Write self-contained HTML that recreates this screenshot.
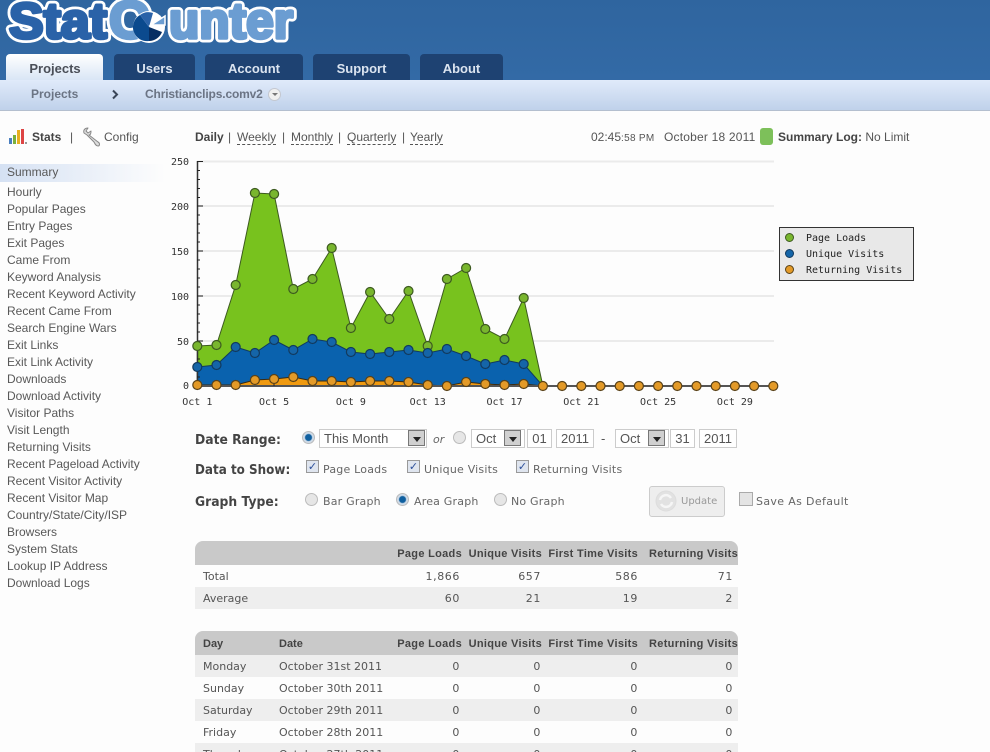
<!DOCTYPE html>
<html><head><meta charset="utf-8"><title>StatCounter</title>
<style>
html,body{margin:0;padding:0}
body{width:990px;height:752px;overflow:hidden;position:relative;background:#fdfdfd;font-family:"Liberation Sans",sans-serif;color:#555;font-size:12px}
#w{position:absolute;left:0;top:0;width:990px;height:752px;overflow:hidden;filter:blur(.3px)}
.a{position:absolute;white-space:nowrap}
#hdr{left:0;top:0;width:990px;height:80px;background:linear-gradient(#2f659f,#336aa6)}
.tab{position:absolute;top:54px;height:26px;background:#1e4272;border-radius:4px 4px 0 0;color:#dbe4f0;font:bold 13px/29px "Liberation Sans",sans-serif;text-align:center}
#sub{left:0;top:80px;width:990px;height:30px;background:linear-gradient(#e0eafa,#bfd1ea);border-bottom:1px solid #b4bfcf}
.sb{left:7px;font-size:12px;line-height:17px;color:#585858}
.dj{font-family:"DejaVu Sans",sans-serif;font-size:11px;color:#666;letter-spacing:.2px}
.lb{font:bold 13px/16px "DejaVu Sans",sans-serif;color:#444;transform-origin:0 0;transform:scaleX(.95)}
.inp{position:absolute;top:429px;height:17px;background:#fff;border:1px solid #ccc;font-size:13px;line-height:18px;color:#555;box-sizing:content-box}
.arr{position:absolute;top:430px;width:17px;height:16px;background:#d0d0d0;border:1px solid #777;box-sizing:border-box}
.arr:after{content:"";position:absolute;left:4px;top:6px;border:4px solid transparent;border-top:5px solid #222;border-bottom:0}
.rad{position:absolute;width:11px;height:11px;border-radius:50%;background:#e6e6e6;border:1px solid #bbb}
.rad.on{background:radial-gradient(circle,#0f5f9f 0 3px,#cfdbe8 4px)}
.chk{position:absolute;width:11px;height:11px;background:#dfe5ef;border:1px solid #999;color:#2c4f9a;font:bold 11px/11px "DejaVu Sans",sans-serif;text-align:center}
.tb{position:absolute;left:195px;width:543px}
.row{position:absolute;left:0;width:543px;height:22px;line-height:22px}
.row span{position:absolute;top:1px;white-space:nowrap;font:11px/22px "DejaVu Sans",sans-serif;color:#555}
.hd{background:#c9c9c9;height:24px;border-radius:8px 8px 0 0}
.hd span{font:bold 11px/24px "Liberation Sans",sans-serif;color:#444;letter-spacing:.3px}
.g{background:#eee}
.row span.r1,.row span.r2,.row span.r3,.row span.r4{letter-spacing:.6px}
.r1{right:278px}.r2{right:197px}.r3{right:100px}.r4{right:5px}
.h1{right:276px}.h2{right:196px}.h3{right:100px}.h4{right:0}
.d1{left:8px}.d2{left:84px}
.dl{top:130px;line-height:14px;color:#555}
.dl u{text-decoration:none;border-bottom:1px dashed #555}
</style></head><body><div id="w">
<div class="a" id="hdr"></div>
<svg class="a" style="left:0;top:0" width="310" height="54" viewBox="0 0 310 54">
<g font-family="'Liberation Sans',sans-serif" font-weight="bold" stroke="#fff" stroke-width="9" stroke-linejoin="round" fill="#fff">
<text x="9" y="38" font-size="50" textLength="98" lengthAdjust="spacingAndGlyphs">Stat</text>
<text x="109" y="38" font-size="53" textLength="40" lengthAdjust="spacingAndGlyphs">C</text>
<text x="169" y="38" font-size="50" textLength="124" lengthAdjust="spacingAndGlyphs">unter</text>
</g>
<g font-family="'Liberation Sans',sans-serif" font-weight="bold" stroke-width="3.500" stroke-linejoin="round">
<text x="9" y="38" font-size="50" fill="#2a62a8" stroke="#2a62a8" textLength="98" lengthAdjust="spacingAndGlyphs">Stat</text>
<text x="109" y="38" font-size="53" fill="#6b9dd2" stroke="#6b9dd2" textLength="40" lengthAdjust="spacingAndGlyphs">C</text>
<text x="169" y="38" font-size="50" fill="#6b9dd2" stroke="#6b9dd2" textLength="124" lengthAdjust="spacingAndGlyphs">unter</text>
</g>
<circle cx="149" cy="27" r="16" fill="#fff"/>
<path d="M149 27L140 15A14 14 0 0 0 149 41Z" fill="#0b4a8e"/>
<path d="M149 27V41A14 14 0 0 0 162 32Z" fill="#062e63"/>
<path d="M149 27L140 15A14 14 0 0 1 153 13Z" fill="#2a62a8"/>
<path d="M151 25L165 16V25Z" fill="#6b9dd2" stroke="#fff" stroke-width="1.500"/>
</svg>
<div class="tab" style="left:6px;width:97px;background:linear-gradient(#fff,#d9e5f5);color:#4a4f58;padding-left:1px;box-sizing:border-box">Projects</div>
<div class="tab" style="left:114px;width:81px">Users</div>
<div class="tab" style="left:205px;width:98px">Account</div>
<div class="tab" style="left:313px;width:97px">Support</div>
<div class="tab" style="left:420px;width:83px">About</div>
<div class="a" id="sub"></div>
<div class="a" style="left:31px;top:87px;font:bold 12px/15px 'Liberation Sans',sans-serif;color:#6b7484">Projects</div>
<svg class="a" style="left:111px;top:89px" width="8" height="11"><path d="M2 1.500L6 5.500L2 9.500" fill="none" stroke="#3a4658" stroke-width="2"/></svg>
<div class="a" style="left:145px;top:87px;font:bold 12px/15px 'Liberation Sans',sans-serif;color:#6b7484;letter-spacing:-.15px">Christianclips.comv2</div>
<div class="a" style="left:268px;top:88px;width:13px;height:13px;border-radius:50%;background:#f0f0f0;border:1px solid #c4c8d0;box-sizing:border-box"></div>
<div class="a" style="left:272px;top:93px;border:3px solid transparent;border-top:3px solid #777;border-bottom:0"></div>

<svg class="a" style="left:8px;top:127px" width="20" height="18"><rect x="1" y="11" width="3" height="6" fill="#4a7fc0"/><rect x="5" y="8" width="3" height="9" fill="#7cb13c"/><rect x="9" y="3" width="3" height="14" fill="#e8b020"/><rect x="13" y="2" width="3" height="15" fill="#d44"/><rect x="17" y="15" width="2" height="2" fill="#999"/></svg>
<div class="a" style="left:32px;top:130px;font:bold 12px/14px 'Liberation Sans',sans-serif;color:#444">Stats</div>
<div class="a" style="left:70px;top:130px;line-height:14px;color:#555">|</div>
<svg class="a" style="left:82px;top:127px" width="20" height="20"><path d="M2 6C1 3 3 1 6 1L4 4L6 6L9 4C9 7 8 8 7 8L16 15C18 16 18 19 16 19C14 19 13 17 12 15L5 8Z" fill="#ddd" stroke="#888" stroke-width="1" stroke-linejoin="round"/></svg>
<div class="a" style="left:104px;top:130px;line-height:14px;color:#555">Config</div>

<div class="a" style="left:0;top:164px;width:165px;height:18px;background:linear-gradient(90deg,#d5e1f3,#fdfdfd)"></div>
<div class="a sb" style="top:164px">Summary</div>
<div class="a sb" style="top:184px">Hourly</div>
<div class="a sb" style="top:201px">Popular Pages</div>
<div class="a sb" style="top:218px">Entry Pages</div>
<div class="a sb" style="top:235px">Exit Pages</div>
<div class="a sb" style="top:252px">Came From</div>
<div class="a sb" style="top:269px">Keyword Analysis</div>
<div class="a sb" style="top:286px">Recent Keyword Activity</div>
<div class="a sb" style="top:303px">Recent Came From</div>
<div class="a sb" style="top:320px">Search Engine Wars</div>
<div class="a sb" style="top:337px">Exit Links</div>
<div class="a sb" style="top:354px">Exit Link Activity</div>
<div class="a sb" style="top:371px">Downloads</div>
<div class="a sb" style="top:388px">Download Activity</div>
<div class="a sb" style="top:405px">Visitor Paths</div>
<div class="a sb" style="top:422px">Visit Length</div>
<div class="a sb" style="top:439px">Returning Visits</div>
<div class="a sb" style="top:456px">Recent Pageload Activity</div>
<div class="a sb" style="top:473px">Recent Visitor Activity</div>
<div class="a sb" style="top:490px">Recent Visitor Map</div>
<div class="a sb" style="top:507px">Country/State/City/ISP</div>
<div class="a sb" style="top:524px">Browsers</div>
<div class="a sb" style="top:541px">System Stats</div>
<div class="a sb" style="top:558px">Lookup IP Address</div>
<div class="a sb" style="top:575px">Download Logs</div>

<div class="a dl" style="left:195px"><b style="color:#444">Daily</b></div>
<div class="a dl" style="left:228px">|</div>
<div class="a dl" style="left:237px"><u>Weekly</u></div>
<div class="a dl" style="left:282px">|</div>
<div class="a dl" style="left:291px"><u>Monthly</u></div>
<div class="a dl" style="left:338px">|</div>
<div class="a dl" style="left:347px"><u>Quarterly</u></div>
<div class="a dl" style="left:402px">|</div>
<div class="a dl" style="left:410px"><u>Yearly</u></div>
<div class="a" style="left:591px;top:130px;line-height:14px;color:#555">02:45<span style="font-size:10px;letter-spacing:.3px">:58 PM</span></div>
<div class="a" style="left:664px;top:130px;line-height:14px;color:#555;letter-spacing:.2px">October 18 2011</div>
<div class="a" style="left:760px;top:128px;width:13px;height:17px;background:#7dc05a;border-radius:3px"></div>
<div class="a" style="left:778px;top:130px;line-height:14px;color:#555"><b style="color:#444">Summary Log:</b> No Limit</div>

<svg class="a" style="left:165px;top:150px" width="625" height="265" viewBox="165 150 625 265">
<g stroke="#ebebeb" stroke-width="2"><path d="M197 161.500H774M197 206H774M197 251H774M197 296H774M197 341H774"/></g>
<path d="M197.300 346L216.500 345L235.700 285L254.900 193L274.100 194L293.300 289L312.500 279L331.700 248L350.900 328L370.100 292L389.300 319L408.500 291L427.700 346L446.900 279L466.100 268L485.300 329L504.500 339L523.700 298L542.900 386H197.300Z" fill="#78c21e" stroke="#3d5a20" stroke-width="1"/>
<path d="M197.300 367L216.500 365L235.700 347L254.900 353L274.100 340L293.300 350L312.500 339L331.700 342L350.900 352L370.100 354L389.300 352L408.500 350L427.700 353L446.900 349L466.100 356L485.300 364L504.500 360L523.700 364L542.900 386H197.300Z" fill="#0a62ae" stroke="#123a5e" stroke-width="1"/>
<path d="M197.300 385L216.500 385L235.700 385L254.900 380L274.100 379L293.300 377L312.500 381L331.700 381L350.900 382L370.100 381L389.300 381L408.500 382L427.700 385L446.900 386L466.100 382L485.300 384L504.500 385L523.700 384L542.900 386H197.300Z" fill="#f09a10" stroke="#3a2a10" stroke-width="1"/>
<path d="M197 386H774" stroke="#555" stroke-width="2"/>
<path d="M197.500 161V386" stroke="#333" stroke-width="1.500"/>
<path d="M197 161.500h6M197 206h6M197 251h6M197 296h6M197 341h6M197 170.500h3M197 179.500h3M197 188.500h3M197 197.500h3M197 215h3M197 224h3M197 233h3M197 242h3M197 260h3M197 269h3M197 278h3M197 287h3M197 305h3M197 314h3M197 323h3M197 332h3M197 350h3M197 359h3M197 368h3M197 377h3M274 386v-5M351 386v-5M428 386v-5M504.500 386v-5M581.500 386v-5M658.500 386v-5M735 386v-5" stroke="#222" stroke-width="1" fill="none"/>
<g fill="#79b62e" stroke="#3d5a20" stroke-width="1.200">
<circle cx="197.300" cy="346" r="4.500"/><circle cx="216.500" cy="345" r="4.500"/><circle cx="235.700" cy="285" r="4.500"/><circle cx="254.900" cy="193" r="4.500"/><circle cx="274.100" cy="194" r="4.500"/><circle cx="293.300" cy="289" r="4.500"/><circle cx="312.500" cy="279" r="4.500"/><circle cx="331.700" cy="248" r="4.500"/><circle cx="350.900" cy="328" r="4.500"/><circle cx="370.100" cy="292" r="4.500"/><circle cx="389.300" cy="319" r="4.500"/><circle cx="408.500" cy="291" r="4.500"/><circle cx="427.700" cy="346" r="4.500"/><circle cx="446.900" cy="279" r="4.500"/><circle cx="466.100" cy="268" r="4.500"/><circle cx="485.300" cy="329" r="4.500"/><circle cx="504.500" cy="339" r="4.500"/><circle cx="523.700" cy="298" r="4.500"/>
</g>
<g fill="#1565a8" stroke="#123a5e" stroke-width="1.200">
<circle cx="197.300" cy="367" r="4.500"/><circle cx="216.500" cy="365" r="4.500"/><circle cx="235.700" cy="347" r="4.500"/><circle cx="254.900" cy="353" r="4.500"/><circle cx="274.100" cy="340" r="4.500"/><circle cx="293.300" cy="350" r="4.500"/><circle cx="312.500" cy="339" r="4.500"/><circle cx="331.700" cy="342" r="4.500"/><circle cx="350.900" cy="352" r="4.500"/><circle cx="370.100" cy="354" r="4.500"/><circle cx="389.300" cy="352" r="4.500"/><circle cx="408.500" cy="350" r="4.500"/><circle cx="427.700" cy="353" r="4.500"/><circle cx="446.900" cy="349" r="4.500"/><circle cx="466.100" cy="356" r="4.500"/><circle cx="485.300" cy="364" r="4.500"/><circle cx="504.500" cy="360" r="4.500"/><circle cx="523.700" cy="364" r="4.500"/>
</g>
<g fill="#e39a28" stroke="#5a4218" stroke-width="1.200">
<circle cx="197.300" cy="385" r="4.500"/><circle cx="216.500" cy="385" r="4.500"/><circle cx="235.700" cy="385" r="4.500"/><circle cx="254.900" cy="380" r="4.500"/><circle cx="274.100" cy="379" r="4.500"/><circle cx="293.300" cy="377" r="4.500"/><circle cx="312.500" cy="381" r="4.500"/><circle cx="331.700" cy="381" r="4.500"/><circle cx="350.900" cy="382" r="4.500"/><circle cx="370.100" cy="381" r="4.500"/><circle cx="389.300" cy="381" r="4.500"/><circle cx="408.500" cy="382" r="4.500"/><circle cx="427.700" cy="385" r="4.500"/><circle cx="446.900" cy="386" r="4.500"/><circle cx="466.100" cy="382" r="4.500"/><circle cx="485.300" cy="384" r="4.500"/><circle cx="504.500" cy="385" r="4.500"/><circle cx="523.700" cy="384" r="4.500"/><circle cx="542.900" cy="386" r="4.500"/><circle cx="562.100" cy="386" r="4.500"/><circle cx="581.300" cy="386" r="4.500"/><circle cx="600.500" cy="386" r="4.500"/><circle cx="619.700" cy="386" r="4.500"/><circle cx="638.900" cy="386" r="4.500"/><circle cx="658.100" cy="386" r="4.500"/><circle cx="677.300" cy="386" r="4.500"/><circle cx="696.500" cy="386" r="4.500"/><circle cx="715.700" cy="386" r="4.500"/><circle cx="734.900" cy="386" r="4.500"/><circle cx="754.100" cy="386" r="4.500"/><circle cx="773.300" cy="386" r="4.500"/>
</g>
<g font-family="'DejaVu Sans Mono',monospace" font-size="10" fill="#333">
<text x="189" y="165" text-anchor="end">250</text><text x="189" y="210" text-anchor="end">200</text><text x="189" y="255" text-anchor="end">150</text><text x="189" y="300" text-anchor="end">100</text><text x="189" y="345" text-anchor="end">50</text><text x="189" y="389" text-anchor="end">0</text>
<text x="197.300" y="405" text-anchor="middle">Oct 1</text><text x="274.100" y="405" text-anchor="middle">Oct 5</text><text x="350.900" y="405" text-anchor="middle">Oct 9</text><text x="427.700" y="405" text-anchor="middle">Oct 13</text><text x="504.500" y="405" text-anchor="middle">Oct 17</text><text x="581.300" y="405" text-anchor="middle">Oct 21</text><text x="658.100" y="405" text-anchor="middle">Oct 25</text><text x="734.900" y="405" text-anchor="middle">Oct 29</text>
</g>
</svg>

<svg class="a" style="left:779px;top:226px" width="136" height="56" viewBox="779 226 136 56">
<rect x="779.500" y="227.500" width="134" height="53" fill="#e8e8e8" stroke="#333"/>
<circle cx="789.500" cy="237.500" r="4" fill="#79b62e" stroke="#3d5a20"/>
<circle cx="789.500" cy="253.500" r="4" fill="#1565a8" stroke="#123a5e"/>
<circle cx="789.500" cy="269.500" r="4" fill="#e39a28" stroke="#5a4218"/>
<g font-family="'DejaVu Sans Mono',monospace" font-size="10" fill="#222">
<text x="806" y="241">Page Loads</text><text x="806" y="257">Unique Visits</text><text x="806" y="273">Returning Visits</text>
</g>
</svg>

<div class="a lb" style="left:195px;top:433px">Date Range:</div>
<div class="a lb" style="left:195px;top:463px;transform:scaleX(.92)">Data to Show:</div>
<div class="a lb" style="left:195px;top:495px">Graph Type:</div>

<div class="rad on" style="left:302px;top:431px"></div>
<div class="inp" style="left:319px;padding-left:4px;width:102px">This Month</div><div class="arr" style="left:408px"></div>
<div class="a" style="left:433px;top:433px;font:italic 11px/14px 'DejaVu Sans',sans-serif;color:#666">or</div>
<div class="rad" style="left:453px;top:431px"></div>
<div class="inp" style="left:471px;width:48px;padding-left:4px">Oct</div><div class="arr" style="left:504px"></div>
<div class="inp" style="left:527px;width:23px;text-align:center">01</div>
<div class="inp" style="left:556px;width:36px;text-align:center">2011</div>
<div class="a" style="left:601px;top:431px;font-size:13px;line-height:16px">-</div>
<div class="inp" style="left:615px;width:48px;padding-left:4px">Oct</div><div class="arr" style="left:648px"></div>
<div class="inp" style="left:670px;width:23px;text-align:center">31</div>
<div class="inp" style="left:699px;width:36px;text-align:center">2011</div>

<div class="chk" style="left:306px;top:460px">✓</div><div class="a dj" style="left:323px;top:463px;line-height:14px">Page Loads</div>
<div class="chk" style="left:407px;top:460px">✓</div><div class="a dj" style="left:424px;top:463px;line-height:14px">Unique Visits</div>
<div class="chk" style="left:516px;top:460px">✓</div><div class="a dj" style="left:533px;top:463px;line-height:14px">Returning Visits</div>

<div class="rad" style="left:305px;top:493px"></div><div class="a dj" style="left:323px;top:495px;line-height:14px">Bar Graph</div>
<div class="rad on" style="left:396px;top:493px"></div><div class="a dj" style="left:414px;top:495px;line-height:14px">Area Graph</div>
<div class="rad" style="left:494px;top:493px"></div><div class="a dj" style="left:511px;top:495px;line-height:14px">No Graph</div>

<div class="a" style="left:649px;top:486px;width:74px;height:29px;background:#eee;border:1px solid #ccc;border-radius:3px"></div>
<svg class="a" style="left:654px;top:489px" width="24" height="24"><circle cx="12" cy="12" r="10" fill="#e2e2e2" stroke="#ddd"/><path d="M6 11A6 6 0 0 1 17 9M18 13A6 6 0 0 1 7 15" fill="none" stroke="#f6f6f6" stroke-width="2.500"/></svg>
<div class="a" style="left:681px;top:495px;font:10px/14px 'DejaVu Sans',sans-serif;color:#999">Update</div>
<div class="a" style="left:739px;top:492px;width:12px;height:12px;background:#e4e4e4;border:1px solid #aaa"></div>
<div class="a dj" style="left:756px;top:495px;line-height:14px;letter-spacing:.35px">Save As Default</div>

<div class="tb" style="top:541px;height:68px">
<div class="row hd" style="top:0"><span class="h1">Page Loads</span><span class="h2">Unique Visits</span><span class="h3">First Time Visits</span><span class="h4">Returning Visits</span></div>
<div class="row" style="top:24px"><span class="d1">Total</span><span class="r1">1,866</span><span class="r2">657</span><span class="r3">586</span><span class="r4">71</span></div>
<div class="row g" style="top:46px"><span class="d1">Average</span><span class="r1">60</span><span class="r2">21</span><span class="r3">19</span><span class="r4">2</span></div>
</div>
<div class="tb" style="top:631px;height:121px;overflow:hidden">
<div class="row hd" style="top:0"><span class="d1" style="letter-spacing:0">Day</span><span class="d2" style="letter-spacing:0">Date</span><span class="h1">Page Loads</span><span class="h2">Unique Visits</span><span class="h3">First Time Visits</span><span class="h4">Returning Visits</span></div>
<div class="row g" style="top:24px"><span class="d1">Monday</span><span class="d2">October 31st 2011</span><span class="r1">0</span><span class="r2">0</span><span class="r3">0</span><span class="r4">0</span></div>
<div class="row" style="top:46px"><span class="d1">Sunday</span><span class="d2">October 30th 2011</span><span class="r1">0</span><span class="r2">0</span><span class="r3">0</span><span class="r4">0</span></div>
<div class="row g" style="top:68px"><span class="d1">Saturday</span><span class="d2">October 29th 2011</span><span class="r1">0</span><span class="r2">0</span><span class="r3">0</span><span class="r4">0</span></div>
<div class="row" style="top:90px"><span class="d1">Friday</span><span class="d2">October 28th 2011</span><span class="r1">0</span><span class="r2">0</span><span class="r3">0</span><span class="r4">0</span></div>
<div class="row g" style="top:112px"><span class="d1">Thursday</span><span class="d2">October 27th 2011</span><span class="r1">0</span><span class="r2">0</span><span class="r3">0</span><span class="r4">0</span></div>
</div>
</div></body></html>
